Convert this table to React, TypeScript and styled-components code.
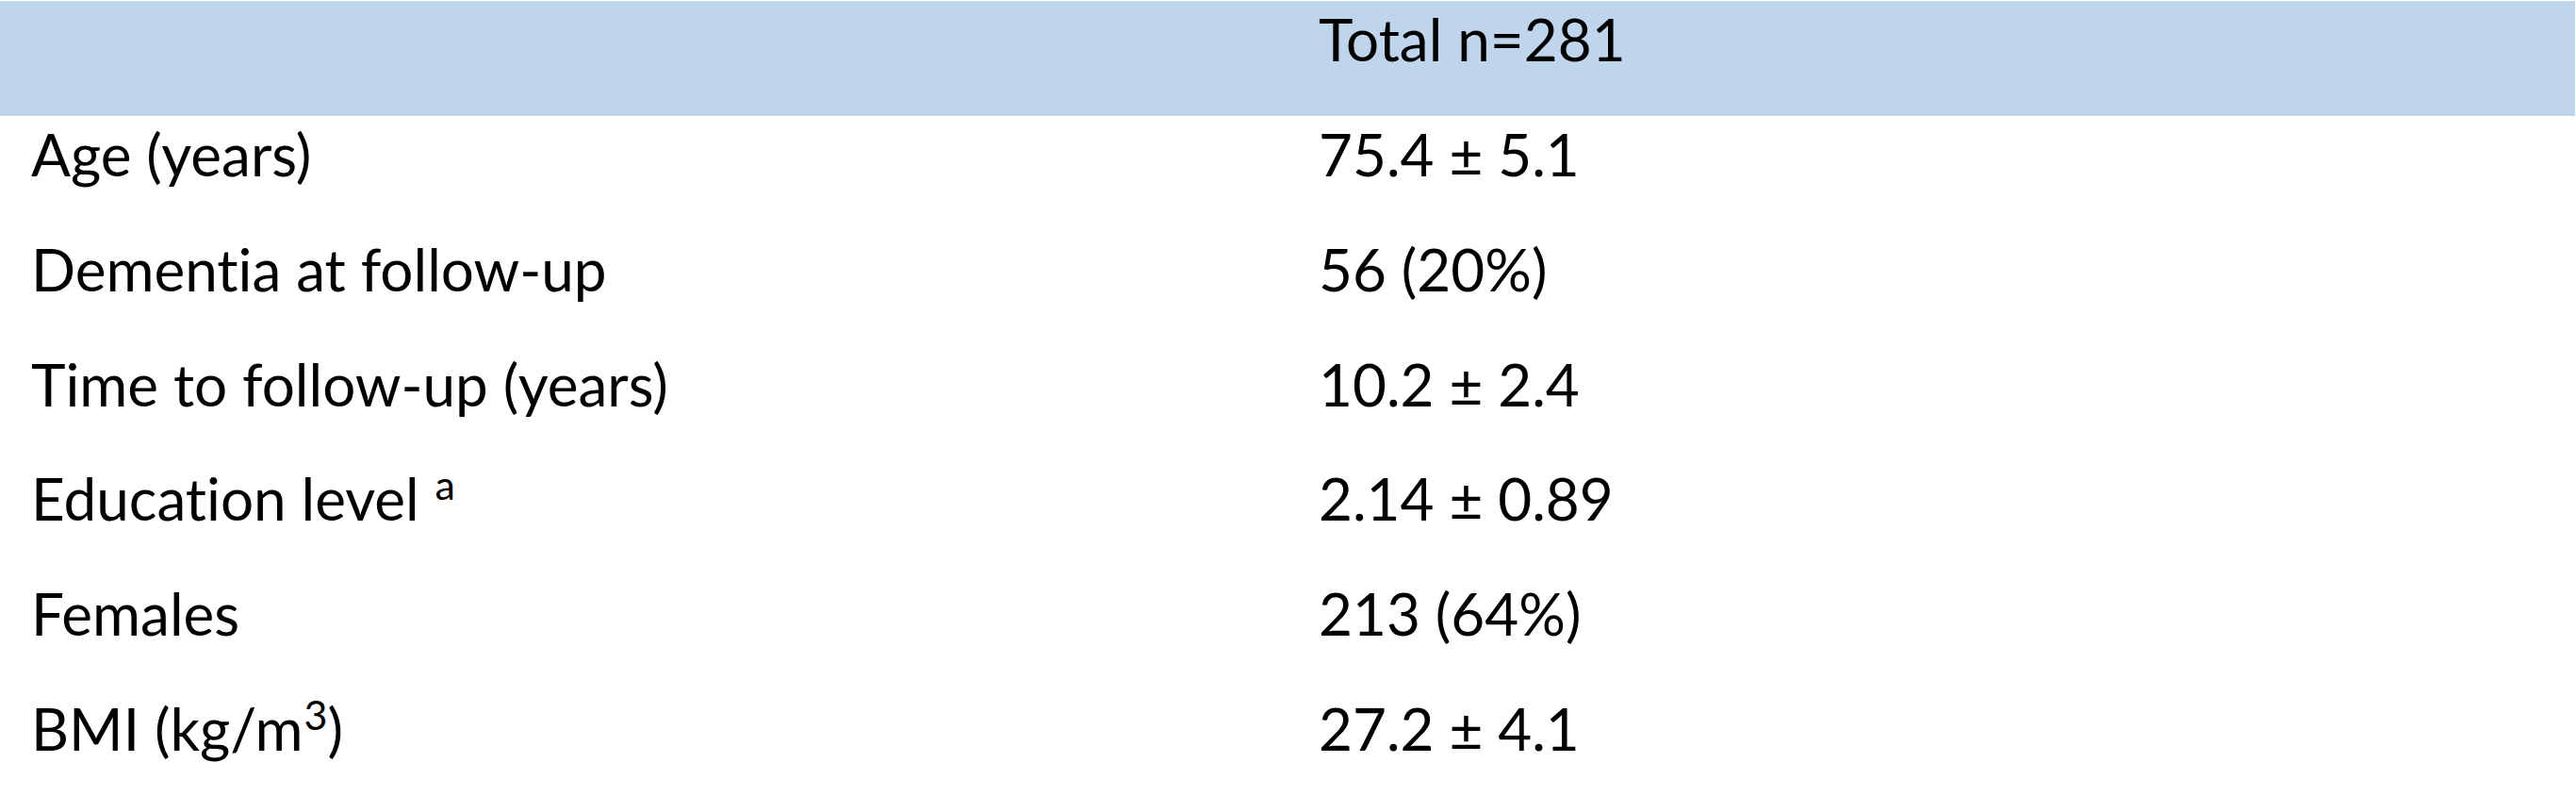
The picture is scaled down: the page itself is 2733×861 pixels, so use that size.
import React from "react";
import styled, { createGlobalStyle } from "styled-components";

const Global = createGlobalStyle`
  html, body { margin: 0; padding: 0; background: #ffffff; }
  body {
    font-family: Lato, "Open Sans", "Liberation Sans", sans-serif;
    color: #000;
    font-variant-ligatures: none;
    font-feature-settings: "liga" 0, "clig" 0, "dlig" 0;
  }
`;

const Table = styled.div`
  display: grid;
  grid-template-columns: 1366px 1fr;
  width: 2732px;
  padding-top: 1px;
`;

const Cell = styled.div<{ $head?: boolean }>`
  height: ${(p) => (p.$head ? 122 : 121.8)}px;
  background: ${(p) => (p.$head ? "#BED5EC" : "transparent")};
  padding-left: 33px;
  padding-top: 9px;
  font-size: 62px;
  line-height: 1;
  box-sizing: border-box;
  white-space: nowrap;
`;

const Sup = styled.span`
  display: inline-block;
  font-size: 43px;
  line-height: 1;
  vertical-align: baseline;
  transform: translateY(-22px);
  margin-left: 1px;
`;

const rows: [React.ReactNode, string][] = [
  ["Age (years)", "75.4 ± 5.1"],
  ["Dementia at follow-up", "56 (20%)"],
  ["Time to follow-up (years)", "10.2 ± 2.4"],
  [<>Education level <Sup>a</Sup></>, "2.14 ± 0.89"],
  ["Females", "213 (64%)"],
  [<>BMI (kg/m<Sup>3</Sup>)</>, "27.2 ± 4.1"],
];

export default function App() {
  return (
    <>
      <Global />
      <Table>
        <Cell $head></Cell>
        <Cell $head>Total n=281</Cell>
        {rows.map(([a, b], i) => (
          <React.Fragment key={i}>
            <Cell>{a}</Cell>
            <Cell>{b}</Cell>
          </React.Fragment>
        ))}
      </Table>
    </>
  );
}
